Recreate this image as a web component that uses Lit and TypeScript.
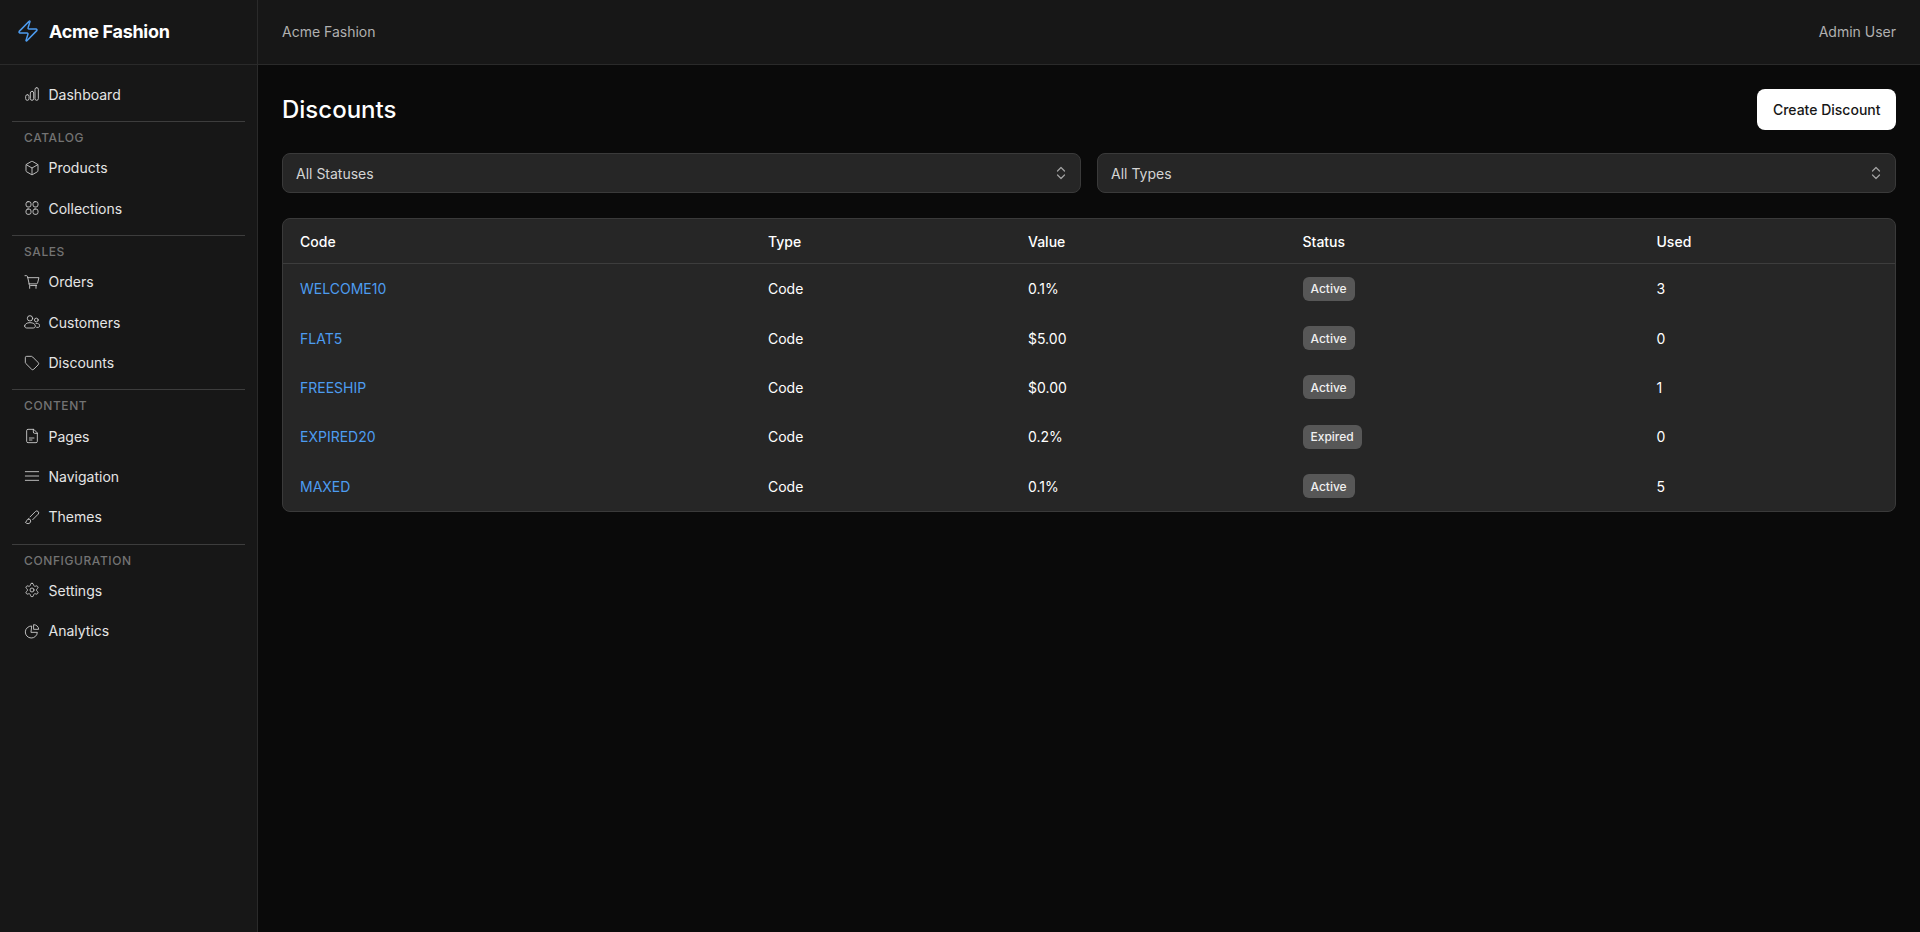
import { LitElement, html, css, svg } from "lit";
import { customElement } from "lit/decorators.js";

const icons: Record<string, unknown> = {
  dashboard: svg`<rect x="2.500" y="13" width="5" height="8.500" rx="2.500"/><rect x="9.500" y="8" width="5" height="13.500" rx="2.500"/><rect x="16.500" y="2.500" width="5" height="19" rx="2.500"/>`,
  box: svg`<path d="M21 8a2 2 0 0 0-1-1.730l-7-4a2 2 0 0 0-2 0l-7 4A2 2 0 0 0 3 8v8a2 2 0 0 0 1 1.730l7 4a2 2 0 0 0 2 0l7-4A2 2 0 0 0 21 16Z"/><path d="m3.300 7 8.700 5 8.700-5"/><path d="M12 22V12"/>`,
  grid: svg`<rect x="3" y="2.500" width="7.500" height="8" rx="3"/><rect x="13.500" y="2.500" width="7.500" height="8" rx="3"/><rect x="3" y="13.500" width="7.500" height="8" rx="3"/><rect x="13.500" y="13.500" width="7.500" height="8" rx="3"/>`,
  cart: svg`<path d="M1.500 2.500h2.200c.8 0 1.400.5 1.600 1.300L8 16c.2.800.8 1.300 1.600 1.300h9.400"/><path d="M5.400 5.500h17l-2 8c-.2.800-.9 1.300-1.700 1.300H7.400"/><path d="M8.500 17.500v4"/><path d="M18 17.500v4"/>`,
  users: svg`<circle cx="9" cy="6.500" r="4"/><circle cx="18.500" cy="9" r="2.800"/><path d="M1 18c0-3 3.300-5 8-5s8 2 8 5c0 1.800-1.200 3-3 3H4c-1.800 0-3-1.200-3-3Z"/><path d="M18 14c3.500-.3 5.500 1.300 5.500 3.700 0 1.300-.9 2.300-2.300 2.300H19"/>`,
  tag: svg`<path d="M12.600 2.600A2 2 0 0 0 11.200 2H4a2 2 0 0 0-2 2v7.200a2 2 0 0 0 .6 1.400l8.700 8.700a2.400 2.400 0 0 0 3.400 0l6.600-6.600a2.400 2.400 0 0 0 0-3.400z"/>`,
  file: svg`<path d="M14 2H6a2 2 0 0 0-2 2v16a2 2 0 0 0 2 2h12a2 2 0 0 0 2-2V8z"/><path d="M14 2v4a2 2 0 0 0 2 2h4"/><path d="M8 15h7"/><path d="M8 18h4"/>`,
  menu: svg`<path d="M2 5.500h20"/><path d="M2 12h20"/><path d="M2 18.500h20"/>`,
  brush: svg`<path d="m9.060 11.900 8.070-8.060a2.850 2.850 0 1 1 4.030 4.030l-8.060 8.080"/><path d="M7.070 14.940c-1.660 0-3 1.350-3 3.020 0 1.330-2.500 1.520-2 2.020 1.080 1.100 2.490 2.020 4 2.020 2.200 0 4-1.800 4-4.040a3.010 3.010 0 0 0-3-3.020z"/>`,
  gear: svg`<path d="M12.220 2h-.440a2 2 0 0 0-2 2v.180a2 2 0 0 1-1 1.730l-.430.250a2 2 0 0 1-2 0l-.150-.080a2 2 0 0 0-2.730.730l-.220.380a2 2 0 0 0 .730 2.730l.150.100a2 2 0 0 1 1 1.720v.510a2 2 0 0 1-1 1.740l-.150.090a2 2 0 0 0-.730 2.730l.220.380a2 2 0 0 0 2.730.730l.150-.080a2 2 0 0 1 2 0l.430.250a2 2 0 0 1 1 1.730V20a2 2 0 0 0 2 2h.440a2 2 0 0 0 2-2v-.180a2 2 0 0 1 1-1.730l.430-.250a2 2 0 0 1 2 0l.150.080a2 2 0 0 0 2.730-.730l.220-.390a2 2 0 0 0-.730-2.730l-.150-.080a2 2 0 0 1-1-1.740v-.500a2 2 0 0 1 1-1.740l.150-.090a2 2 0 0 0 .730-2.730l-.220-.380a2 2 0 0 0-2.730-.730l-.150.080a2 2 0 0 1-2 0l-.430-.250a2 2 0 0 1-1-1.730V4a2 2 0 0 0-2-2z"/><circle cx="12" cy="12" r="3"/>`,
  pie: svg`<path d="M11 4.500a9 9 0 1 0 9 9.500h-9z"/><path d="M15 2.500a7 7 0 0 1 7 7h-7z"/>`,
};

const sections = [
  { items: [["dashboard", "Dashboard"]] },
  { label: "CATALOG", items: [["box", "Products"], ["grid", "Collections"]] },
  { label: "SALES", items: [["cart", "Orders"], ["users", "Customers"], ["tag", "Discounts"]] },
  { label: "CONTENT", items: [["file", "Pages"], ["menu", "Navigation"], ["brush", "Themes"]] },
  { label: "CONFIGURATION", items: [["gear", "Settings"], ["pie", "Analytics"]] },
];

const rows = [
  ["WELCOME10", "Code", "0.1%", "Active", "3"],
  ["FLAT5", "Code", "$5.00", "Active", "0"],
  ["FREESHIP", "Code", "$0.00", "Active", "1"],
  ["EXPIRED20", "Code", "0.2%", "Expired", "0"],
  ["MAXED", "Code", "0.1%", "Active", "5"],
];

const chevrons = html`<svg class="chev" viewBox="0 0 12 16" fill="none" stroke="currentColor" stroke-width="1.200" stroke-linecap="round" stroke-linejoin="round"><path d="M2.500 6 6 2.500 9.500 6"/><path d="M2.500 10 6 13.500 9.500 10"/></svg>`;

@customElement("app-root")
export class AppRoot extends LitElement {
  static styles = css`
    :host { display: block; height: 932px; background: #0a0a0a; color: #fff; font-family: Inter, "Noto Sans", sans-serif; font-size: 14px; overflow: hidden; }
    * { box-sizing: border-box; }
    .app { display: flex; height: 932px; }
    .side { width: 258px; flex: none; background: #171717; border-right: 1px solid #2a2a2a; }
    .brand { height: 65px; border-bottom: 1px solid #2a2a2a; display: flex; align-items: center; gap: 9px; padding: 0 0 2px 16px; font-size: 18px; font-weight: 700; letter-spacing: -0.3px; }
    .brand svg { width: 24px; height: 24px; color: #4d9cf0; flex: none; }
    nav { padding: 9px 12px; }
    .sec { padding-bottom: 6.500px; }
    .sec + .sec { border-top: 1px solid #3d3d3d; padding-top: 4px; }
    .label { font-size: 12px; font-weight: 500; color: #737373; letter-spacing: 0.6px; height: 21.700px; line-height: 24px; padding-left: 12px; }
    .item { height: 40.400px; display: flex; align-items: center; gap: 8.500px; padding-left: 12px; color: #e5e5e5; font-weight: 400; font-size: 14px; }
    .item svg { width: 16px; height: 16px; flex: none; fill: none; stroke: #d4d4d4; stroke-width: 1.300; stroke-linecap: round; stroke-linejoin: round; }
    .main { flex: 1; min-width: 0; display: flex; flex-direction: column; }
    .top { height: 65px; flex: none; background: #171717; border-bottom: 1px solid #2a2a2a; display: flex; align-items: center; justify-content: space-between; padding: 0 24px 2px 24px; color: #b0b0b0; font-size: 14px; }
    .content { padding: 24px; }
    .head { display: flex; justify-content: space-between; align-items: center; height: 41px; }
    h1 { margin: 0; font-size: 24px; font-weight: 500; padding-bottom: 1px; }
    .btn { height: 41px; padding: 0 15.500px 1px; background: #fff; color: #171717; border-radius: 8px; display: flex; align-items: center; font-weight: 500; font-size: 14px; }
    .filters { display: grid; grid-template-columns: 1fr 1fr; gap: 16px; margin-top: 23px; }
    .select { height: 40px; background: #262626; border: 1px solid #3a3a3a; border-radius: 8px; display: flex; align-items: center; justify-content: space-between; padding: 0 13px; color: #d4d4d4; }
    .chev { width: 12px; height: 16px; color: #a3a3a3; }
    .card { margin-top: 25px; background: #262626; border: 1px solid #3a3a3a; border-radius: 8px; overflow: hidden; }
    .row { display: grid; grid-template-columns: 468px 260px 274.500px 354px 1fr; align-items: center; padding-left: 17px; height: 49.400px; }
    .row.h { height: 45px; border-bottom: 1px solid #3d3d3d; font-weight: 500; }
    a { color: #4d9cf0; text-decoration: none; }
    .badge { display: inline-flex; align-items: center; height: 24px; padding: 0 8px; border-radius: 6px; background: #575757; color: #f0f0f0; font-size: 12px; font-weight: 500; }
  `;

  render() {
    return html`<div class="app">
      <aside class="side">
        <div class="brand"><svg viewBox="0 0 24 24" fill="none" stroke="currentColor" stroke-width="1.500" stroke-linejoin="round" stroke-linecap="round"><path d="M4 14a1 1 0 0 1-.78-1.630l9.900-10.200a.5.5 0 0 1 .86.460l-1.920 6.020A1 1 0 0 0 13 10h7a1 1 0 0 1 .78 1.630l-9.900 10.200a.5.5 0 0 1-.86-.460l1.920-6.020A1 1 0 0 0 11 14z"/></svg>Acme Fashion</div>
        <nav>
          ${sections.map((s) => html`<div class="sec">
            ${s.label ? html`<div class="label">${s.label}</div>` : ""}
            ${s.items.map(([ic, t]) => html`<div class="item"><svg viewBox="0 0 24 24">${icons[ic]}</svg>${t}</div>`)}
          </div>`)}
        </nav>
      </aside>
      <div class="main">
        <header class="top"><span>Acme Fashion</span><span>Admin User</span></header>
        <div class="content">
          <div class="head"><h1>Discounts</h1><div class="btn">Create Discount</div></div>
          <div class="filters">
            <div class="select">All Statuses${chevrons}</div>
            <div class="select">All Types${chevrons}</div>
          </div>
          <div class="card">
            <div class="row h"><span>Code</span><span>Type</span><span>Value</span><span>Status</span><span>Used</span></div>
            ${rows.map((r) => html`<div class="row"><a href="#">${r[0]}</a><span>${r[1]}</span><span>${r[2]}</span><span><span class="badge">${r[3]}</span></span><span>${r[4]}</span></div>`)}
          </div>
        </div>
      </div>
    </div>`;
  }
}
